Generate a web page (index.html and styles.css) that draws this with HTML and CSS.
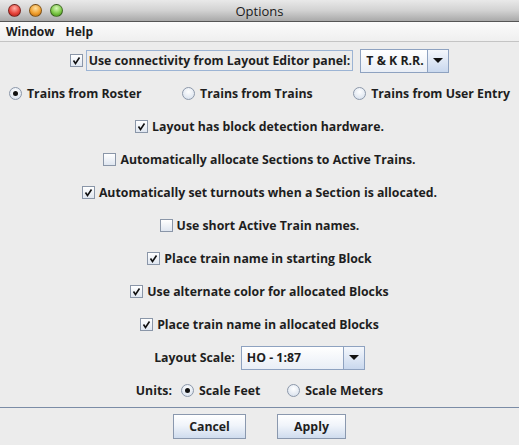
FILE: index.html
```html
<!DOCTYPE html>
<html>
<head>
<meta charset="utf-8">
<link rel="stylesheet" href="styles.css">
</head>
<body>
<div class="win">
  <div class="titlebar">
    <div class="lights">
      <span class="light red"></span>
      <span class="light orange"></span>
      <span class="light green"></span>
    </div>
    <div class="title">Options</div>
  </div>
  <div class="menubar">
    <span class="menu">Window</span>
    <span class="menu">Help</span>
  </div>
  <div class="content">
    <div class="row">
      <span class="cb checked"><svg viewBox="0 0 13 13" width="13" height="13"><path d="M3.5 6.5 L5.5 9.5 L9.5 3.5" fill="none" stroke="#111" stroke-width="1.6"/></svg></span>
      <span class="lbl focus">Use connectivity from Layout Editor panel:</span>
      <span class="combo combo-small"><span class="combo-text">T &amp; K R.R.</span><span class="combo-btn"><span class="tri"></span></span></span>
    </div>
    <div class="row row-radios">
      <span class="ritem"><span class="radio on"></span><span class="lbl">Trains from Roster</span></span>
      <span class="ritem"><span class="radio"></span><span class="lbl">Trains from Trains</span></span>
      <span class="ritem"><span class="radio"></span><span class="lbl">Trains from User Entry</span></span>
    </div>
    <div class="row">
      <span class="cb checked"><svg viewBox="0 0 13 13" width="13" height="13"><path d="M3.5 6.5 L5.5 9.5 L9.5 3.5" fill="none" stroke="#111" stroke-width="1.6"/></svg></span>
      <span class="lbl">Layout has block detection hardware.</span>
    </div>
    <div class="row">
      <span class="cb"></span>
      <span class="lbl">Automatically allocate Sections to Active Trains.</span>
    </div>
    <div class="row">
      <span class="cb checked"><svg viewBox="0 0 13 13" width="13" height="13"><path d="M3.5 6.5 L5.5 9.5 L9.5 3.5" fill="none" stroke="#111" stroke-width="1.6"/></svg></span>
      <span class="lbl">Automatically set turnouts when a Section is allocated.</span>
    </div>
    <div class="row">
      <span class="cb"></span>
      <span class="lbl">Use short Active Train names.</span>
    </div>
    <div class="row">
      <span class="cb checked"><svg viewBox="0 0 13 13" width="13" height="13"><path d="M3.5 6.5 L5.5 9.5 L9.5 3.5" fill="none" stroke="#111" stroke-width="1.6"/></svg></span>
      <span class="lbl">Place train name in starting Block</span>
    </div>
    <div class="row">
      <span class="cb checked"><svg viewBox="0 0 13 13" width="13" height="13"><path d="M3.5 6.5 L5.5 9.5 L9.5 3.5" fill="none" stroke="#111" stroke-width="1.6"/></svg></span>
      <span class="lbl">Use alternate color for allocated Blocks</span>
    </div>
    <div class="row">
      <span class="cb checked"><svg viewBox="0 0 13 13" width="13" height="13"><path d="M3.5 6.5 L5.5 9.5 L9.5 3.5" fill="none" stroke="#111" stroke-width="1.6"/></svg></span>
      <span class="lbl">Place train name in allocated Blocks</span>
    </div>
    <div class="row">
      <span class="lbl scale-lbl">Layout Scale:</span>
      <span class="combo combo-wide"><span class="combo-text">HO - 1:87</span><span class="combo-btn"><span class="tri"></span></span></span>
    </div>
    <div class="row">
      <span class="lbl units-lbl">Units:</span>
      <span class="ritem"><span class="radio on"></span><span class="lbl">Scale Feet</span></span>
      <span class="ritem gap-l"><span class="radio"></span><span class="lbl">Scale Meters</span></span>
    </div>
  </div>
  <div class="sep"></div>
  <div class="buttons">
    <span class="btn btn-cancel">Cancel</span>
    <span class="btn btn-apply">Apply</span>
  </div>
</div>
</body>
</html>
```

FILE: styles.css
```css
html, body {
  margin: 0;
  padding: 0;
  background: #eeeeee;
}
body {
  font-family: "Open Sans", "DejaVu Sans", sans-serif;
  font-size: 12.3px;
  color: #1e1e1e;
}
.win {
  width: 519px;
  height: 445px;
  background: #ececec;
  display: flex;
  flex-direction: column;
}
.titlebar {
  height: 22px;
  box-sizing: border-box;
  background: linear-gradient(#e9e9e9, #d2d2d2 50%, #a9a9a9);
  border-bottom: 1px solid #555;
  position: relative;
  display: flex;
  align-items: center;
  justify-content: center;
}
.lights {
  position: absolute;
  left: 8px;
  top: 4px;
  display: flex;
  gap: 8px;
}
.light {
  width: 13px;
  height: 13px;
  border-radius: 50%;
  box-sizing: border-box;
  border: 1px solid rgba(0,0,0,0.45);
}
.red { background: radial-gradient(circle at 50% 30%, #ffb0a8, #e8453c 55%, #a01810); }
.orange { background: radial-gradient(circle at 50% 30%, #ffe0a0, #f0a030 55%, #b06008); }
.green { background: radial-gradient(circle at 50% 30%, #d8f8b8, #7cc848 55%, #3a8010); }
.title {
  font-family: "Open Sans", "DejaVu Sans", sans-serif;
  font-weight: 400;
  font-size: 13px;
  color: #1a1a1a;
}
.menubar {
  height: 20px;
  box-sizing: border-box;
  background: linear-gradient(#fbfbfb, #efefef);
  border-bottom: 1px solid #c4c4c4;
  display: flex;
  align-items: center;
  padding-left: 6px;
  gap: 11px;
  font-weight: 700;
  font-size: 12px;
}
.content {
  display: flex;
  flex-direction: column;
  padding-top: 2px;
}
.row {
  height: 33px;
  display: flex;
  align-items: center;
  justify-content: center;
}
.lbl {
  font-weight: 700;
  white-space: nowrap;
}
.cb {
  width: 13px;
  height: 13px;
  box-sizing: border-box;
  border: 1px solid #8a96a8;
  background: linear-gradient(#ffffff, #dfe6f0);
  margin-right: 4px;
  display: inline-flex;
}
.cb svg { display: block; margin: -1px; }
.focus {
  border: 1px solid #9cb4d4;
  padding: 1px 2px;
  margin-left: -1px;
}
.combo {
  display: inline-flex;
  height: 24px;
  box-sizing: border-box;
  border: 1px solid #8ea2c0;
  background: linear-gradient(#ffffff, #e9eef6);
  align-items: stretch;
}
.combo-small { width: 89px; margin-left: 7px; }
.combo-wide { width: 124px; margin-left: 6px; }
.combo-text {
  flex: 1;
  display: flex;
  align-items: center;
  padding-left: 5px;
  font-weight: 700;
}
.combo-btn {
  width: 20px;
  border-left: 1px solid #8ea2c0;
  background: linear-gradient(#f4f7fc, #c9d8ee);
  display: flex;
  align-items: center;
  justify-content: center;
}
.tri {
  width: 0;
  height: 0;
  border-left: 5px solid transparent;
  border-right: 5px solid transparent;
  border-top: 5px solid #111;
}
.row-radios {
  justify-content: space-between;
  padding: 0 9px 0 9px;
}
.ritem {
  display: inline-flex;
  align-items: center;
}
.radio {
  width: 13px;
  height: 13px;
  border-radius: 50%;
  box-sizing: border-box;
  border: 1px solid #8c98aa;
  background: radial-gradient(circle at 50% 35%, #ffffff, #dbe3ee 80%);
  margin-right: 5px;
  position: relative;
}
.radio.on::after {
  content: "";
  position: absolute;
  left: 3px;
  top: 3px;
  width: 5px;
  height: 5px;
  border-radius: 50%;
  background: #111;
}
.units-lbl { margin-right: 9px; }
.gap-l { margin-left: 27px; }
.sep {
  height: 1px;
  background: #7b8ca6;
}
.buttons {
  flex: 1;
  display: flex;
  justify-content: center;
  gap: 31px;
  padding-top: 6px;
}
.btn {
  height: 25px;
  box-sizing: border-box;
  border: 1px solid #8a98ae;
  background: linear-gradient(#ffffff, #f0f4fa 45%, #cfdcee);
  display: flex;
  align-items: center;
  justify-content: center;
  font-weight: 700;
}
.btn-cancel { width: 73px; }
.btn-apply { width: 69px; }
```
